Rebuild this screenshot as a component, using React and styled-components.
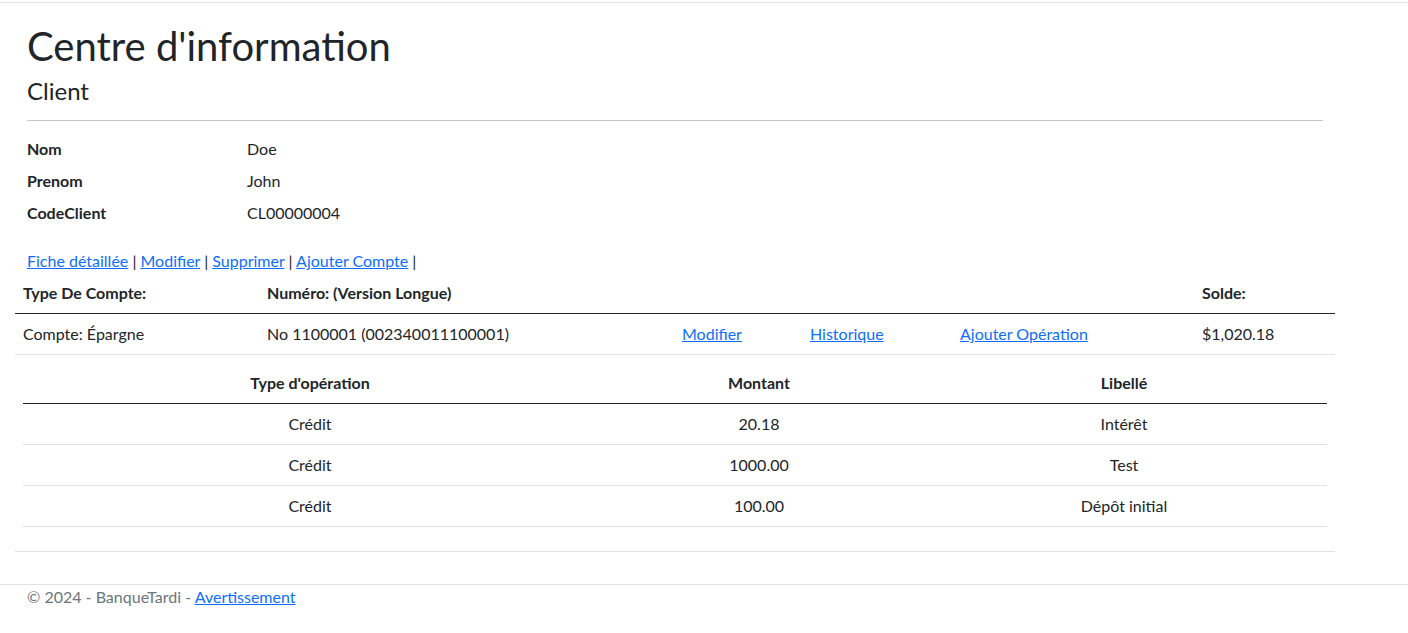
import styled, { createGlobalStyle } from "styled-components";

const GlobalStyle = createGlobalStyle`
  body {
    margin: 0;
    font-family: Lato, "Open Sans", sans-serif;
    font-size: 16px;
    line-height: 1.5;
    color: #212529;
    background: #fff;
  }
  a {
    color: #0d6efd;
    text-decoration: underline;
  }
`;

const TopBar = styled.div`
  height: 2px;
  border-bottom: 1px solid #dee2e6;
`;

const Main = styled.main`
  width: 1320px;
  padding-left: 15px;
  padding-bottom: 32px;
`;

const Title = styled.h1`
  margin: 19px 12px 6px;
  font-size: 40px;
  font-weight: 400;
  line-height: 48px;
`;

const Subtitle = styled.h4`
  margin: 0 12px;
  font-size: 24px;
  font-weight: 400;
  line-height: 29px;
`;

const Divider = styled.hr`
  margin: 15px 12px 16px;
  border: 0;
  border-top: 1px solid #c6c6c6;
`;

const Details = styled.dl`
  display: grid;
  grid-template-columns: 220px 1100px;
  margin: 0 0 16px;
`;

const Term = styled.dt`
  padding: 0 12px;
  font-weight: 700;
  margin-bottom: 8px;
`;

const Value = styled.dd`
  margin: 0 0 8px;
  padding: 0 12px;
`;

const Actions = styled.div`
  padding: 0 12px;
  line-height: 24px;
`;

const Table = styled.table`
  width: ${(p) => p.$width};
  border-collapse: collapse;
  table-layout: fixed;
  margin-bottom: ${(p) => (p.$nested ? "16px" : "0")};
`;

const Th = styled.th`
  padding: 8px;
  text-align: ${(p) => (p.$center ? "center" : "left")};
  font-weight: 700;
  border-bottom: 1px solid #212529;
  line-height: 24px;
`;

const Td = styled.td`
  padding: 8px;
  text-align: ${(p) => (p.$center ? "center" : "left")};
  border-bottom: 1px solid #dee2e6;
  line-height: 24px;
  vertical-align: top;
`;

const Footer = styled.footer`
  border-top: 1px solid #dee2e6;
  padding-left: 27px;
  line-height: 24px;
  color: #6c757d;
`;

const operations = [
  { type: "Crédit", montant: "20.18", libelle: "Intérêt" },
  { type: "Crédit", montant: "1000.00", libelle: "Test" },
  { type: "Crédit", montant: "100.00", libelle: "Dépôt initial" },
];

export default function App() {
  return (
    <>
      <GlobalStyle />
      <TopBar />
      <Main>
        <Title>Centre d'information</Title>
        <Subtitle>Client</Subtitle>
        <Divider />
        <Details>
          <Term>Nom</Term>
          <Value>Doe</Value>
          <Term>Prenom</Term>
          <Value>John</Value>
          <Term>CodeClient</Term>
          <Value>CL00000004</Value>
        </Details>
        <Actions>
          <a href="#">Fiche détaillée</a> | <a href="#">Modifier</a> |{" "}
          <a href="#">Supprimer</a> | <a href="#">Ajouter Compte</a> |
        </Actions>

        <Table $width="1320px">
          <colgroup>
            <col style={{ width: 244 }} />
            <col style={{ width: 415 }} />
            <col style={{ width: 128 }} />
            <col style={{ width: 150 }} />
            <col style={{ width: 242 }} />
            <col style={{ width: 141 }} />
          </colgroup>
          <thead>
            <tr>
              <Th>Type De Compte:</Th>
              <Th>Numéro: (Version Longue)</Th>
              <Th />
              <Th />
              <Th />
              <Th>Solde:</Th>
            </tr>
          </thead>
          <tbody>
            <tr>
              <Td>Compte: Épargne</Td>
              <Td>No 1100001 (002340011100001)</Td>
              <Td>
                <a href="#">Modifier</a>
              </Td>
              <Td>
                <a href="#">Historique</a>
              </Td>
              <Td>
                <a href="#">Ajouter Opération</a>
              </Td>
              <Td>$1,020.18</Td>
            </tr>
            <tr>
              <Td colSpan={6}>
                <Table $width="100%" $nested>
                  <colgroup>
                    <col style={{ width: 574 }} />
                    <col style={{ width: 324 }} />
                    <col style={{ width: 406 }} />
                  </colgroup>
                  <thead>
                    <tr>
                      <Th $center>Type d'opération</Th>
                      <Th $center>Montant</Th>
                      <Th $center>Libellé</Th>
                    </tr>
                  </thead>
                  <tbody>
                    {operations.map((op, i) => (
                      <tr key={i}>
                        <Td $center>{op.type}</Td>
                        <Td $center>{op.montant}</Td>
                        <Td $center>{op.libelle}</Td>
                      </tr>
                    ))}
                  </tbody>
                </Table>
              </Td>
            </tr>
          </tbody>
        </Table>
      </Main>
      <Footer>
        © 2024 - BanqueTardi - <a href="#">Avertissement</a>
      </Footer>
    </>
  );
}
